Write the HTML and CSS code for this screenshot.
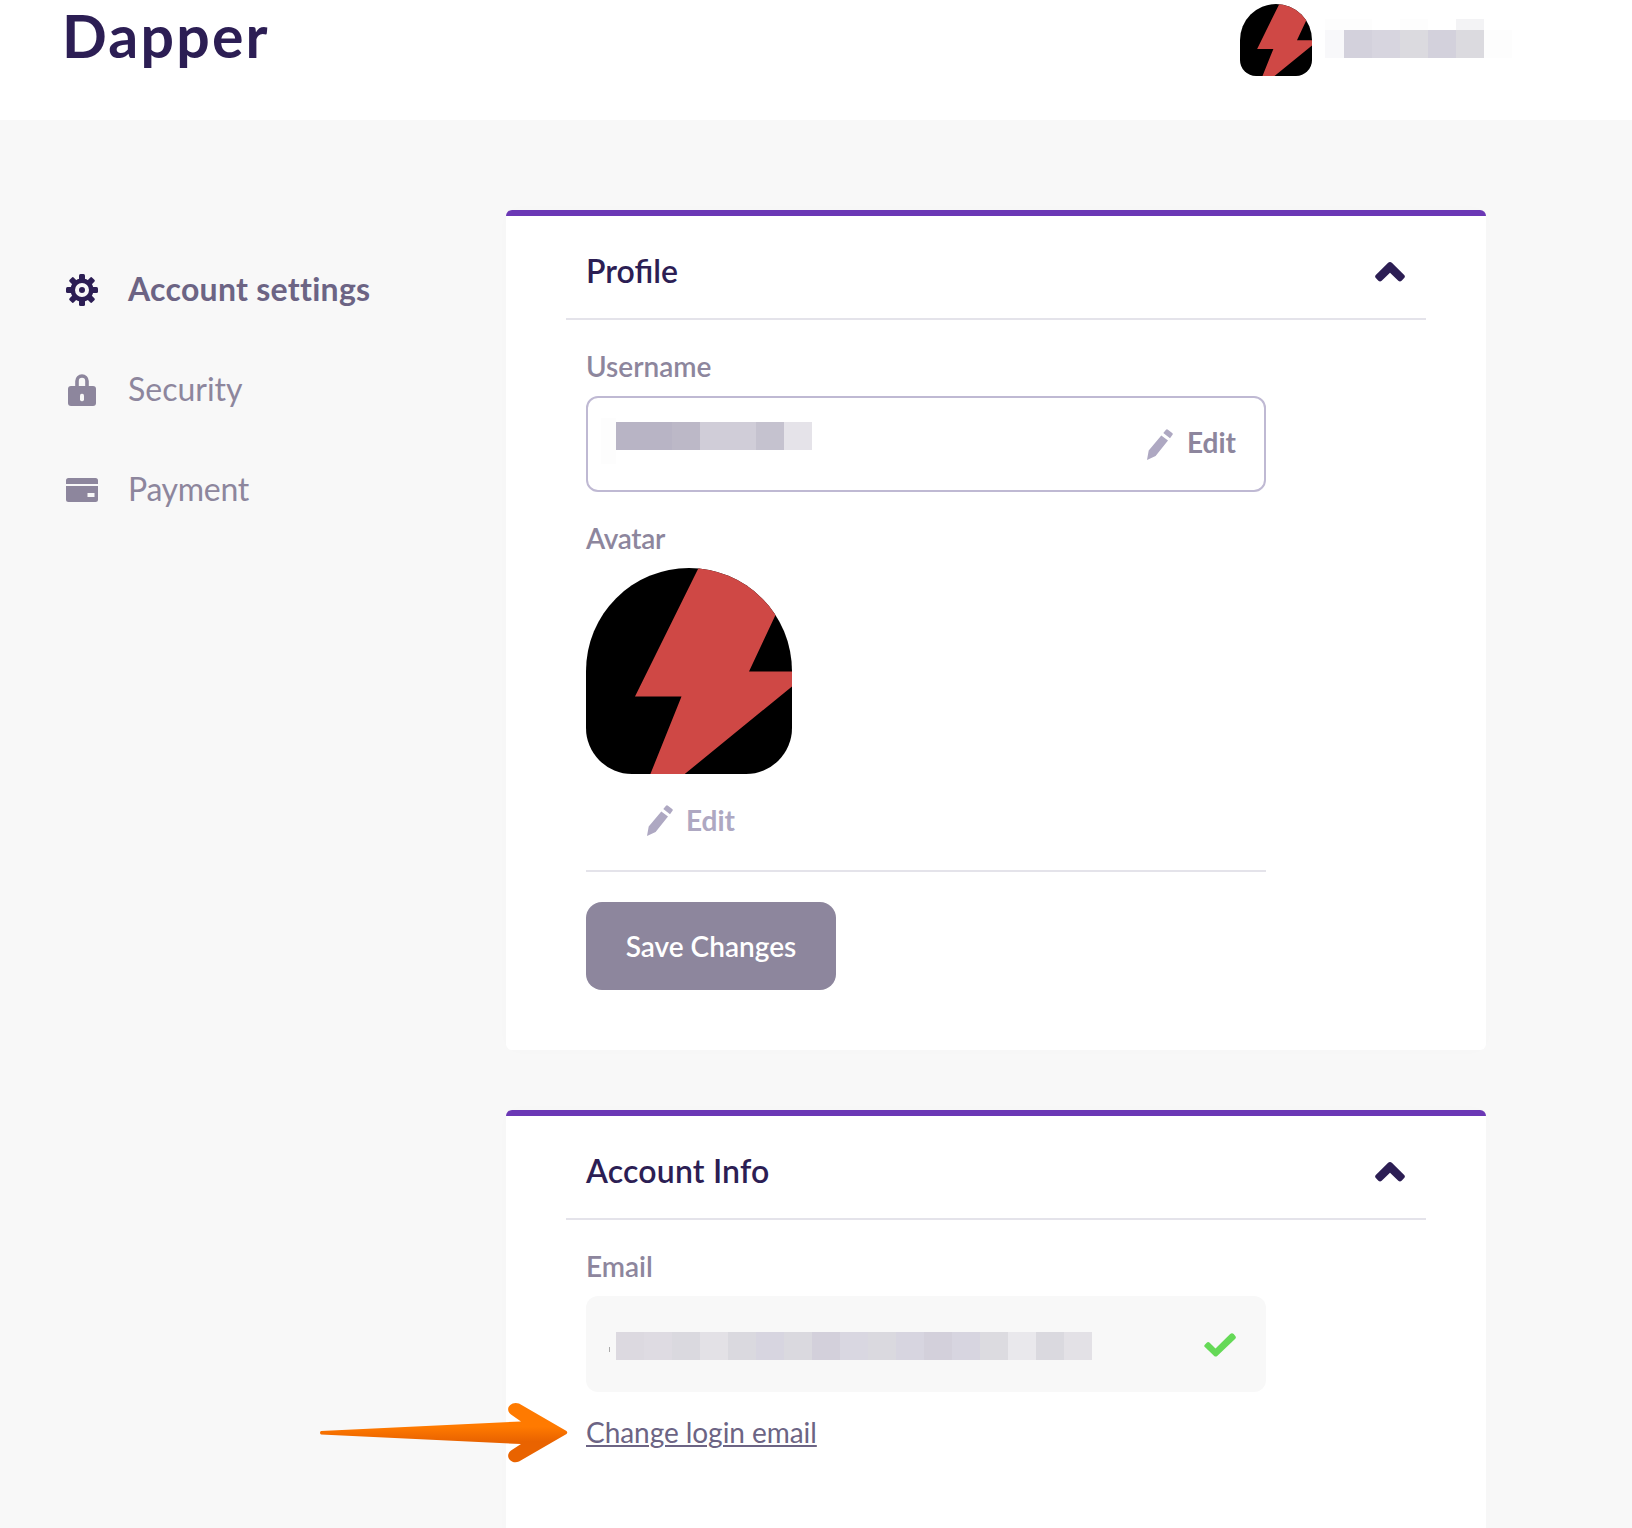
FILE: index.html
```html
<!DOCTYPE html>
<html lang="en">
<head>
<meta charset="utf-8">
<title>Dapper – Account settings</title>
<link rel="stylesheet" href="styles.css">
</head>
<body>
<svg class="defs" width="0" height="0" aria-hidden="true">
  <symbol id="avatar" viewBox="0 0 206 206">
    <rect width="206" height="206" fill="#000"/>
    <path d="M113 -1 49 128.500H95.500L64 207H97.500L206 118.500V103.500H163L189.500 47 211 -1Z" fill="#cf4845"/>
  </symbol>
  <symbol id="pencil" viewBox="0 0 26 32">
    <path d="M14.300 7.400 21 12.600 8.600 28.100 0 32 1.700 22.600Z M19 1.700Q19.700 .8 20.600 1.400L25.200 5Q26.200 5.800 25.500 6.800L23 10.300 16.300 5Z" fill="#aea8c2"/>
  </symbol>
  <symbol id="chevron" viewBox="0 0 30 20">
    <path d="M12.900 .9Q15 -.9 17.100 .9L29.200 13Q30.600 14.500 29.200 16L26.600 18.800Q25 20.400 23.300 18.800L15 10.700 6.700 18.800Q5 20.400 3.400 18.800L.8 16Q-.6 14.500.8 13Z" fill="#2c1e54"/>
  </symbol>
</svg>
<header class="topbar">
  <div class="logo">Dapper</div>
  <div class="account">
    <svg class="avatar-small" width="72" height="72"><use href="#avatar"/></svg>
    <svg class="masked-name" width="187" height="39">
      <path fill="#fdfdfd" d="M0 0h47v11H0zM75 0h28v11H75zM159 11h28v28h-28z"/>
      <path fill="#f8f8fa" d="M0 11h19v28H0z"/>
      <path fill="#f3f3f5" d="M131 0h28v11h-28z"/>
      <path fill="#d3d1dc" d="M19 11h28v28H19zM103 11h28v28h-28z"/>
      <path fill="#d7d5df" d="M47 11h28v28H47z"/>
      <path fill="#dbdadf" d="M75 11h28v28H75zM131 11h28v28h-28z"/>
    </svg>
  </div>
</header>
<main class="page">
  <nav class="sidebar">
    <a class="nav-item active">
      <svg width="32" height="32" viewBox="-16 -16 32 32">
        <g fill="#2c1e54">
          <circle r="11.500"/>
          <rect x="-3" y="-16" width="6" height="32" rx="1.500"/>
          <rect x="-3" y="-16" width="6" height="32" rx="1.500" transform="rotate(45)"/>
          <rect x="-3" y="-16" width="6" height="32" rx="1.500" transform="rotate(90)"/>
          <rect x="-3" y="-16" width="6" height="32" rx="1.500" transform="rotate(135)"/>
        </g>
        <circle r="5" fill="none" stroke="#f8f8f8" stroke-width="4"/>
      </svg>
      <span>Account settings</span>
    </a>
    <a class="nav-item">
      <svg width="32" height="32" viewBox="0 0 32 32">
        <path d="M11 13V7a5 5 0 0 1 10 0v6" fill="none" stroke="#8d869d" stroke-width="3.600"/>
        <rect x="2" y="12" width="28" height="20" rx="3" fill="#8d869d"/>
        <rect x="14" y="19.700" width="4" height="7.500" rx="1.700" fill="#f8f8f8"/>
      </svg>
      <span>Security</span>
    </a>
    <a class="nav-item">
      <svg width="32" height="32" viewBox="0 0 32 32">
        <path d="M2.500 4h27A2.500 2.500 0 0 1 32 6.500V10H0V6.500A2.500 2.500 0 0 1 2.500 4ZM0 12h32v13.500a2.500 2.500 0 0 1-2.500 2.500h-27A2.500 2.500 0 0 1 0 25.500Z" fill="#8d869d"/>
        <path d="M21.500 19h7v4h-7z" fill="#f8f8f8"/>
      </svg>
      <span class="nav-payment">Payment</span>
    </a>
  </nav>
  <div class="cards">
    <section class="card profile">
      <div class="card-head"><h2>Profile</h2><svg width="30" height="20"><use href="#chevron"/></svg></div>
      <div class="card-body">
        <div class="label">Username</div>
        <div class="field outlined">
          <svg class="masked-user" width="211" height="46">
            <path fill="#fdfdfd" d="M0 0h15v46H0z"/>
            <path fill="#b8b4c5" d="M15 4h56v28H15z"/>
            <path fill="#bcb8c7" d="M71 4h28v28H71z"/>
            <path fill="#d0cdd8" d="M99 4h56v28H99z"/>
            <path fill="#c5c2cf" d="M155 4h28v28h-28z"/>
            <path fill="#e5e3e9" d="M183 4h28v28h-28z"/>
          </svg>
          <a class="edit"><svg width="26" height="32"><use href="#pencil"/></svg><span>Edit</span></a>
        </div>
        <div class="label avatar-label">Avatar</div>
        <svg class="avatar-large" width="206" height="206"><use href="#avatar"/></svg>
        <a class="edit edit-avatar"><svg width="26" height="32"><use href="#pencil"/></svg><span>Edit</span></a>
        <div class="rule"></div>
        <button class="save">Save Changes</button>
      </div>
    </section>
    <section class="card info">
      <div class="card-head"><h2 class="info-title">Account Info</h2><svg width="30" height="20"><use href="#chevron"/></svg></div>
      <div class="card-body">
        <div class="label">Email</div>
        <div class="field filled">
          <svg class="masked-email" width="483" height="28">
            <path fill="#aaa" d="M0 15h1v5H0z"/>
            <path fill="#dcd9e0" d="M7 0h28v28H7z"/>
            <path fill="#dedbe2" d="M35 0h28v28H35z"/>
            <path fill="#dad9df" d="M63 0h28v28H63zM119 0h28v28h-28zM175 0h28v28h-28zM259 0h28v28h-28zM427 0h28v28h-28z"/>
            <path fill="#e3e1e6" d="M91 0h28v28H91zM455 0h28v28h-28z"/>
            <path fill="#d7d5e0" d="M147 0h28v28h-28zM287 0h28v28h-28zM343 0h28v28h-28z"/>
            <path fill="#d3d0db" d="M203 0h28v28h-28zM315 0h28v28h-28z"/>
            <path fill="#d9d7e1" d="M231 0h28v28h-28z"/>
            <path fill="#dcdbe0" d="M371 0h28v28h-28z"/>
            <path fill="#e9e8ec" d="M399 0h28v28h-28z"/>
          </svg>
          <svg class="check" width="32" height="24" viewBox="0 0 32 24">
            <path d="M0.600 12.100 2.700 9.700Q4.200 8.200 5.700 9.700L11.500 15.500 26.200 1Q28 -.7 29.700 1L31.300 2.900Q32.500 4.300 31.300 5.700L13.200 22.900Q11.700 24 10.200 22.900L.6 13.700Q-.1 12.900.6 12.100Z" fill="#65d957"/>
          </svg>
        </div>
        <a class="change-link">Change login email</a>
      </div>
    </section>
  </div>
</main>
<svg class="pointer" width="250" height="64" viewBox="0 0 250 64">
  <defs>
    <linearGradient id="orange" x1="0" y1="0" x2="0" y2="1">
      <stop offset="0.400" stop-color="#ff7a00"/><stop offset="0.650" stop-color="#e96300"/>
    </linearGradient>
  </defs>
  <path d="M2 31 202 21.500 192 14.500C185 9 192 .5 200 3.500L247.500 31Q249 32.500 247.500 34L200 61.500C192 65 185 56 192 50.500L202 44 2 34.500Q0 32.500 2 31Z" fill="url(#orange)"/>
</svg>
</body>
</html>
```
FILE: styles.css
```css
* { box-sizing: border-box; }
body {
  margin: 0;
  height: 1528px;
  overflow: hidden;
  position: relative;
  background: #f8f8f8;
  font-family: Lato, "Liberation Sans", sans-serif;
  font-size: 28px;
  color: #8d869d;
}
svg { display: block; flex: none; }
.defs { position: absolute; }
.topbar {
  height: 120px;
  background: #fff;
  display: flex;
  justify-content: space-between;
  padding: 0 120px 0 62px;
}
.logo {
  padding-top: 3px;
  font-size: 59px;
  line-height: 66px;
  font-weight: 700;
  letter-spacing: 2.2px;
  color: #2c1e54;
}
.account { display: flex; gap: 13px; padding-top: 4px; }
.avatar-small { border-radius: 36px 36px 16px 16px; }
.masked-name { margin-top: 15px; }
.page { display: flex; }
.sidebar {
  width: 506px;
  padding: 140px 0 0 66px;
  display: flex;
  flex-direction: column;
  gap: 40px;
}
.nav-item {
  height: 60px;
  display: flex;
  align-items: center;
  gap: 30px;
  font-size: 32px;
  line-height: 40px;
  white-space: nowrap;
}
.nav-item span { padding-bottom: 2px; }
.nav-item .nav-payment { letter-spacing: -.3px; }
.nav-item.active {
  font-weight: 700;
  font-variant-ligatures: none;
  letter-spacing: .28px;
  color: #6c6484;
}
.cards {
  width: 980px;
  padding-top: 90px;
  display: flex;
  flex-direction: column;
  gap: 60px;
}
.card {
  background: #fff;
  border-top: 6px solid #6b38b5;
  border-radius: 6px;
  box-shadow: 0 0 20px rgba(0, 0, 0, .012);
  padding: 0 60px;
}
.profile { height: 840px; }
.info { height: 480px; }
.card-head {
  height: 104px;
  border-bottom: 2px solid #e4e3ea;
  padding: 0 21px 0 20px;
  display: flex;
  justify-content: space-between;
}
.card-head h2 {
  margin: 35px 0 0;
  font-size: 32px;
  line-height: 40px;
  font-weight: 600;
  color: #2c1e54;
}
.card-head .info-title { letter-spacing: .2px; }
.card-head svg { margin-top: 46px; }
.card-body { width: 720px; padding: 29px 20px 0; }
.label { line-height: 34px; font-weight: 600; }
.field {
  height: 96px;
  margin-top: 13px;
  border-radius: 12px;
  display: flex;
  justify-content: space-between;
}
.outlined { border: 2px solid #bfb9d3; padding: 0 28px 0 13px; }
.filled { background: #f8f8f8; padding: 0 30px 0 23px; }
.masked-user { margin-top: 20px; }
.masked-email { margin-top: 36px; }
.check { margin-top: 37px; }
.edit {
  display: flex;
  gap: 14px;
  font-weight: 700;
  line-height: 34px;
}
.edit svg { margin-top: 3px; }
.outlined .edit { padding-top: 27px; }
.avatar-label { margin-top: 29px; letter-spacing: -.3px; }
.avatar-large { margin-top: 13px; border-radius: 103px 103px 46px 46px; }
.edit-avatar { margin: 29px 0 0 61px; gap: 13px; color: #aea8c2; }
.edit-avatar svg { margin-top: 1px; }
.rule { height: 2px; margin-top: 33px; background: #e4e3ea; }
.save {
  display: block;
  width: 250px;
  height: 88px;
  margin-top: 30px;
  padding: 0;
  border: 0;
  border-radius: 16px;
  background: #8d869d;
  color: #fff;
  font: 600 28px/88px Lato, "Liberation Sans", sans-serif;
}
.change-link {
  display: block;
  width: max-content;
  margin-top: 23px;
  line-height: 34px;
  letter-spacing: -.05px;
  color: #6c6484;
  text-decoration: underline;
  text-decoration-thickness: 2px;
  text-underline-offset: 2px;
}
.pointer { position: absolute; left: 319px; top: 1400px; }
```
